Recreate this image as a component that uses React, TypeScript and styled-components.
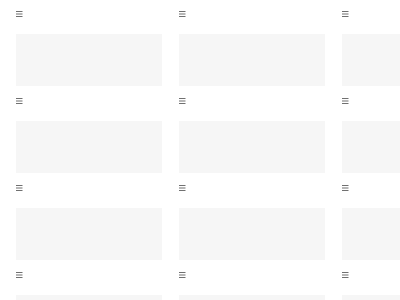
import React from "react";
import styled, { createGlobalStyle } from "styled-components";

const GlobalStyle = createGlobalStyle`
  html, body {
    margin: 0;
    padding: 0;
    background: #ffffff;
    font-family: "Liberation Sans", Arial, sans-serif;
  }
`;

const Page = styled.div`
  width: 400px;
  height: 300px;
  overflow: hidden;
  background: #fff;
`;

const Grid = styled.div`
  display: grid;
  grid-template-columns: repeat(3, 163px);
  grid-auto-rows: 87px;
  width: 489px;
`;

const Tile = styled.div`
  display: flex;
  flex-direction: column;
  padding: 10px 1px 0 16px;
`;

const Handle = styled.svg`
  display: block;
  width: 7px;
  height: 7px;
  margin-bottom: 17px;
`;

const Placeholder = styled.div`
  width: 146px;
  height: 52px;
  background: #f6f6f6;
`;

const MenuIcon = () => (
  <Handle viewBox="0 0 7 7">
    <rect x="0" y="1" width="6.5" height="1" fill="#707070" />
    <rect x="0" y="3.5" width="6.5" height="1" fill="#707070" />
    <rect x="0" y="6" width="6.5" height="1" fill="#707070" />
  </Handle>
);

const App = () => {
  const tiles = Array.from({ length: 12 });
  return (
    <>
      <GlobalStyle />
      <Page>
        <Grid>
          {tiles.map((_, i) => (
            <Tile key={i}>
              <MenuIcon />
              <Placeholder />
            </Tile>
          ))}
        </Grid>
      </Page>
    </>
  );
};

export default App;
